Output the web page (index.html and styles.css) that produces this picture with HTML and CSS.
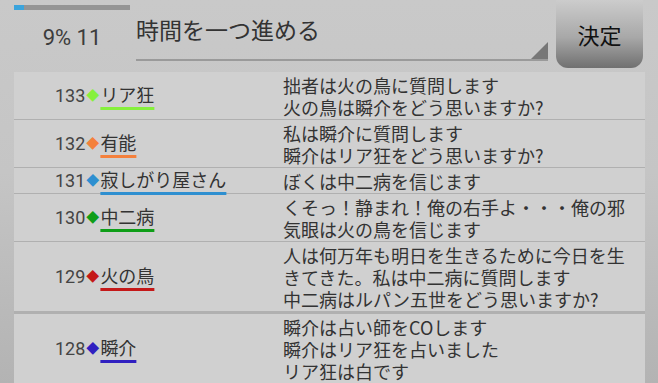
FILE: index.html
```html
<!DOCTYPE html>
<html lang="ja">
<head>
    <meta charset="UTF-8">
    <meta name="viewport" content="width=device-width, initial-scale=1.0">
    <title>時間を一つ進める</title>
    <link rel="stylesheet" href="styles.css">
</head>
<body>
    <header class="top-bar">
        <div class="status">
            <div class="progress"><div class="progress-fill" style="width: 9%"></div></div>
            <p class="status-text">9% 11</p>
        </div>
        <div class="spinner">
            <span class="spinner-label">時間を一つ進める</span>
            <span class="spinner-arrow"></span>
        </div>
        <button class="decide-btn">決定</button>
    </header>
    <main class="log">
        <div class="row">
            <div class="who"><span class="num">133</span><span class="mark green-light">◆</span><span class="name green-light">リア狂</span></div>
            <div class="msg">拙者は火の鳥に質問します<br>火の鳥は瞬介をどう思いますか?</div>
        </div>
        <div class="row">
            <div class="who"><span class="num">132</span><span class="mark orange">◆</span><span class="name orange">有能</span></div>
            <div class="msg">私は瞬介に質問します<br>瞬介はリア狂をどう思いますか?</div>
        </div>
        <div class="row">
            <div class="who"><span class="num">131</span><span class="mark blue">◆</span><span class="name blue">寂しがり屋さん</span></div>
            <div class="msg">ぼくは中二病を信じます</div>
        </div>
        <div class="row">
            <div class="who"><span class="num">130</span><span class="mark green">◆</span><span class="name green">中二病</span></div>
            <div class="msg">くそっ！静まれ！俺の右手よ・・・俺の邪気眼は火の鳥を信じます</div>
        </div>
        <div class="row thick">
            <div class="who"><span class="num">129</span><span class="mark red">◆</span><span class="name red">火の鳥</span></div>
            <div class="msg">人は何万年も明日を生きるために今日を生きてきた。私は中二病に質問します<br>中二病はルパン五世をどう思いますか?</div>
        </div>
        <div class="row">
            <div class="who"><span class="num">128</span><span class="mark indigo">◆</span><span class="name indigo">瞬介</span></div>
            <div class="msg">瞬介は占い師をCOします<br>瞬介はリア狂を占いました<br>リア狂は白です</div>
        </div>
    </main>
</body>
</html>
```

FILE: styles.css
```css
:root {
    --page-bg: #c9c9c9;
    --row-bg: #d0d0d0;
    --line-color: #b0b0b0;
    --text-color: #3c3c3c;
}
html, body {
    height: 100%;
}
body {
    margin: 0;
    overflow: hidden;
    font-family: Roboto, "Noto Sans CJK JP", sans-serif;
    color: var(--text-color);
    background: linear-gradient(to bottom, #c9c9c9 0%, #c5c5c5 45%, #b3b3b3 100%);
}
.top-bar {
    display: flex;
    height: 72px;
    padding-right: 15px;
}
.status {
    width: 116px;
    padding-left: 14px;
    padding-top: 5px;
    margin-right: 6px;
}
.progress {
    height: 5px;
    background-color: #959595;
}
.progress-fill {
    height: 100%;
    background-color: #3ba4dc;
}
.status-text {
    margin: 14px 0 0;
    text-align: center;
    font-size: 22px;
    line-height: 28px;
}
.spinner {
    position: relative;
    width: 412px;
    height: 61px;
    border-bottom: 2px solid #9a9a9a;
    box-sizing: border-box;
}
.spinner-label {
    display: block;
    padding-top: 17px;
    font-size: 23px;
    line-height: 30px;
    color: #333;
}
.spinner-arrow {
    position: absolute;
    right: 0;
    bottom: 0;
    width: 0;
    height: 0;
    border-left: 17px solid transparent;
    border-bottom: 17px solid #777;
}
.decide-btn {
    margin-left: 8px;
    width: 87px;
    height: 68px;
    border: none;
    border-radius: 0 0 12px 12px;
    background: linear-gradient(to bottom, #cccccc 0%, #a8a8a8 55%, #707070 100%);
    font-family: "Noto Sans CJK JP", sans-serif;
    font-size: 22px;
    color: #111;
    padding: 0;
}
.log {
    margin: 0 13px 0 14px;
}
.row {
    display: grid;
    grid-template-columns: 269px 1fr;
    background-color: var(--row-bg);
    border-bottom: 1px solid var(--line-color);
    padding: 2px 0 1px;
}
.row.thick {
    border-bottom-width: 3px;
}
.who {
    display: flex;
    align-items: center;
    padding-left: 41px;
    font-size: 18px;
    line-height: 22px;
}
.num {
    color: #444;
}
.mark {
    font-size: 13px;
    margin: 0 1px;
}
.name {
    color: #333;
    text-decoration: underline 3px;
    text-underline-offset: 5px;
}
.msg {
    font-size: 18px;
    line-height: 22px;
    color: #333;
    font-family: "Noto Sans CJK JP", sans-serif;
    padding-right: 8px;
}
.mark.green-light { color: #86f03c; }
.name.green-light { text-decoration-color: #86f03c; }
.mark.orange { color: #f4803c; }
.name.orange { text-decoration-color: #f4803c; }
.mark.blue { color: #2e8fd0; }
.name.blue { text-decoration-color: #2e8fd0; }
.mark.green { color: #0f9e18; }
.name.green { text-decoration-color: #0f9e18; }
.mark.red { color: #c41818; }
.name.red { text-decoration-color: #c41818; }
.mark.indigo { color: #3020c0; }
.name.indigo { text-decoration-color: #3020c0; }
```
